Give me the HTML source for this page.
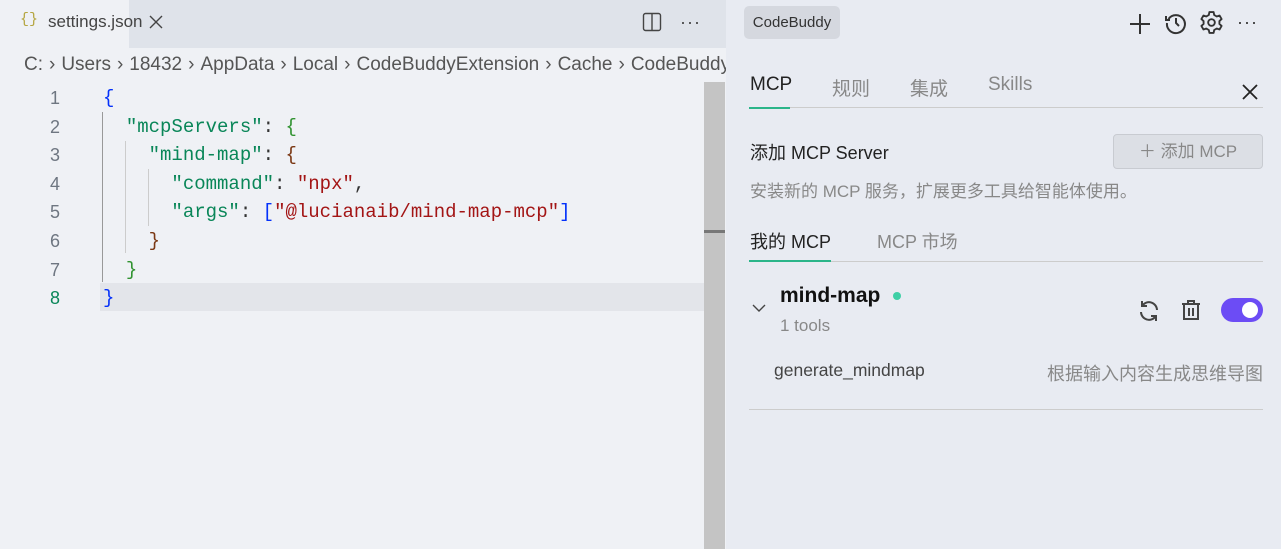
<!DOCTYPE html>
<html><head><meta charset="utf-8"><style>
*{margin:0;padding:0;box-sizing:border-box}
body{width:1281px;height:549px;overflow:hidden;background:#eff1f5;font-family:"Segoe UI","Liberation Sans","Noto Sans CJK SC",sans-serif;position:relative}
.abs{position:absolute}
.tabbar{left:0;top:0;width:726px;height:48px;background:#dfe3ea}
.tab{left:0;top:0;width:129px;height:48px;background:#eff1f5}
.mono{font-family:"Liberation Mono",monospace;font-size:19px;white-space:pre}
.ln{width:40px;text-align:right;color:#6e7681;font-size:18px;font-family:"Liberation Sans",sans-serif}
.k{color:#098658}.s{color:#a31515}.b1{color:#0431fa}.b2{color:#319331}.b3{color:#7b3814}.p{color:#333}
.right{left:726px;top:0;width:555px;height:549px;background:#e8ebf2}
.cjk{font-family:"Liberation Sans","Noto Sans CJK SC",sans-serif}
.sep{display:inline-block;margin:0 6px}
</style></head><body>
<div class="abs tabbar"></div>
<div class="abs tab"></div>
<div class="abs" style="left:20px;top:11px;color:#b5a642;font-size:15px;font-family:'Liberation Mono',monospace">{}</div>
<div class="abs" style="left:48px;top:12px;font-size:17px;color:#444">settings.json</div>
<svg class="abs" style="left:148px;top:14px" width="16" height="16"><path d="M2 2l12 12M14 2L2 14" stroke="#444" stroke-width="1.4"/></svg>
<svg class="abs" style="left:642px;top:12px" width="20" height="20"><rect x="1.5" y="1.5" width="17" height="17" rx="2" fill="none" stroke="#444" stroke-width="1.4"/><line x1="10" y1="2" x2="10" y2="18" stroke="#444" stroke-width="1.4"/></svg>
<div class="abs" style="left:680px;top:12px;font-size:18px;color:#444;letter-spacing:1px">···</div>
<div class="abs" style="left:24px;top:54px;width:702px;overflow:hidden;font-size:19px;color:#555;white-space:nowrap">C:<span class="sep">&#x203A;</span>Users<span class="sep">&#x203A;</span>18432<span class="sep">&#x203A;</span>AppData<span class="sep">&#x203A;</span>Local<span class="sep">&#x203A;</span>CodeBuddyExtension<span class="sep">&#x203A;</span>Cache<span class="sep">&#x203A;</span>CodeBuddy</div>
<div class="abs" style="left:100px;top:283px;width:604px;height:28px;background:#e3e5ea"></div>
<div class="abs" style="left:704px;top:82px;width:21px;height:467px;background:#c4c4c4"></div>
<div class="abs" style="left:704px;top:230px;width:21px;height:3px;background:#777"></div>
<div class="abs" style="left:102px;top:112px;width:1px;height:170px;background:#999"></div>
<div class="abs" style="left:125px;top:141px;width:1px;height:112px;background:#ccc"></div>
<div class="abs" style="left:148px;top:169px;width:1px;height:57px;background:#ccc"></div>
<div class="abs" style="left:20px;top:84px;line-height:28.6px">
<div class="ln">1</div><div class="ln">2</div><div class="ln">3</div><div class="ln">4</div><div class="ln">5</div><div class="ln">6</div><div class="ln">7</div><div class="ln" style="color:#098658">8</div></div>
<div class="abs mono" style="left:103px;top:84px;line-height:28.6px"><span class="b1">{</span>
  <span class="k">"mcpServers"</span><span class="p">: </span><span class="b2">{</span>
    <span class="k">"mind-map"</span><span class="p">: </span><span class="b3">{</span>
      <span class="k">"command"</span><span class="p">: </span><span class="s">"npx"</span><span class="p">,</span>
      <span class="k">"args"</span><span class="p">: </span><span class="b1">[</span><span class="s">"@lucianaib/mind-map-mcp"</span><span class="b1">]</span>
    <span class="b3">}</span>
  <span class="b2">}</span>
<span class="b1">}</span></div>

<div class="abs right"></div>
<div class="abs" style="left:744px;top:6px;width:96px;height:33px;background:#d5d8df;border-radius:5px;font-size:15px;color:#333;line-height:33px;text-align:center">CodeBuddy</div>
<svg class="abs" style="left:1128px;top:12px" width="24" height="24"><path d="M12 2v20M2 12h20" stroke="#333" stroke-width="2"/></svg>
<svg class="abs" style="left:1164px;top:11px" width="24" height="24"><path d="M4.5 8A9 9 0 1 1 3 12" fill="none" stroke="#333" stroke-width="2"/><path d="M2 5v4h4" fill="none" stroke="#333" stroke-width="2"/><path d="M12 7v5l3 3" fill="none" stroke="#333" stroke-width="2"/></svg>
<svg class="abs" style="left:1199px;top:10px" width="25" height="25" viewBox="0 0 24 24"><circle cx="12" cy="12" r="3.2" fill="none" stroke="#333" stroke-width="1.8"/><path d="M10 2h4l.6 2.8 2.4 1.4 2.7-.9 2 3.4-2.1 1.9v2.8l2.1 1.9-2 3.4-2.7-.9-2.4 1.4L14 22h-4l-.6-2.8-2.4-1.4-2.7.9-2-3.4 2.1-1.9v-2.8L2.3 8.7l2-3.4 2.7.9 2.4-1.4z" fill="none" stroke="#333" stroke-width="1.8" stroke-linejoin="round"/></svg>
<div class="abs" style="left:1237px;top:12px;font-size:18px;color:#333;letter-spacing:1px">···</div>
<div class="abs cjk" style="left:750px;top:74px;font-size:19px;color:#222">MCP</div>
<div class="abs cjk" style="left:832px;top:74px;font-size:19px;color:#888">规则</div>
<div class="abs cjk" style="left:910px;top:74px;font-size:19px;color:#888">集成</div>
<div class="abs cjk" style="left:988px;top:74px;font-size:19px;color:#888">Skills</div>
<div class="abs" style="left:749px;top:107px;width:514px;height:1px;background:#ccc"></div>
<div class="abs" style="left:749px;top:107px;width:41px;height:2px;background:#2bb58a"></div>
<svg class="abs" style="left:1241px;top:83px" width="18" height="18"><path d="M2 2l14 14M16 2L2 16" stroke="#222" stroke-width="1.8"/></svg>
<div class="abs cjk" style="left:750px;top:139px;font-size:18px;color:#222">添加 MCP Server</div>
<div class="abs cjk" style="left:1113px;top:134px;width:150px;height:35px;border:1px solid #c8cbd1;background:#dcdfe5;border-radius:4px;font-size:17px;color:#888;line-height:33px;text-align:center">＋ 添加 MCP</div>
<div class="abs cjk" style="left:750px;top:177px;font-size:17px;color:#888">安装新的 MCP 服务，扩展更多工具给智能体使用。</div>
<div class="abs cjk" style="left:750px;top:228px;font-size:18px;color:#222">我的 MCP</div>
<div class="abs cjk" style="left:877px;top:228px;font-size:18px;color:#888">MCP 市场</div>
<div class="abs" style="left:749px;top:261px;width:514px;height:1px;background:#ccc"></div>
<div class="abs" style="left:749px;top:260px;width:82px;height:2px;background:#2bb58a"></div>
<svg class="abs" style="left:752px;top:303px" width="14" height="10"><path d="M1 2l6 6 6-6" fill="none" stroke="#444" stroke-width="1.4"/></svg>
<div class="abs cjk" style="left:780px;top:284px;font-size:21px;font-weight:bold;color:#111">mind-map</div>
<div class="abs" style="left:893px;top:292px;width:8px;height:8px;border-radius:50%;background:#3ecfa6"></div>
<div class="abs cjk" style="left:780px;top:316px;font-size:17px;color:#888">1 tools</div>
<svg class="abs" style="left:1137px;top:299px" width="24" height="24" viewBox="0 0 24 24"><path d="M20 11a8 8 0 0 0-14.5-4.5M4 13a8 8 0 0 0 14.5 4.5" fill="none" stroke="#444" stroke-width="2"/><path d="M5 2v5h5M19 22v-5h-5" fill="none" stroke="#444" stroke-width="2"/></svg>
<svg class="abs" style="left:1180px;top:299px" width="22" height="22" viewBox="0 0 22 22"><path d="M2 5h18M8 5V2h6v3M4 5v15h14V5M9 9v8M13 9v8" fill="none" stroke="#444" stroke-width="2"/></svg>
<div class="abs" style="left:1221px;top:298px;width:42px;height:24px;border-radius:12px;background:#6c4cf5"></div>
<div class="abs" style="left:1242px;top:302px;width:16px;height:16px;border-radius:50%;background:#fff"></div>
<div class="abs cjk" style="left:774px;top:360px;font-size:17.5px;color:#444">generate_mindmap</div>
<div class="abs cjk" style="left:1047px;top:360px;font-size:18px;color:#888">根据输入内容生成思维导图</div>
<div class="abs" style="left:749px;top:409px;width:514px;height:1px;background:#ccc"></div>
</body></html>
